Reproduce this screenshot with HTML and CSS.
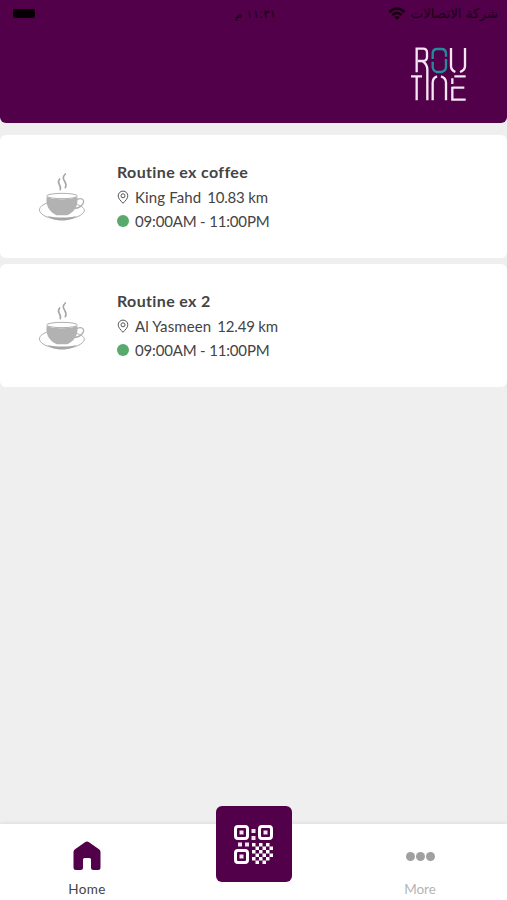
FILE: index.html
```html
<!DOCTYPE html>
<html lang="en">
<head>
    <meta charset="UTF-8">
    <meta name="viewport" content="width=device-width, initial-scale=1.0">
    <title>Routine</title>
    <link rel="stylesheet" href="styles.css">
</head>
<body>
    <svg class="sprites" aria-hidden="true">
        <symbol id="cup" viewBox="114 126 144 150">
            <g fill="none" stroke="#b0b0b0" stroke-width="3">
                <path d="M142 219C121 226 114 238 121 247C139 275 232 275 251 247C258 236 247 228 224 221"/>
                <ellipse cx="186" cy="198" rx="46" ry="8"/>
                <path d="M231 208C250 201 257 214 244 227C237 234 229 235 221 235" stroke-width="4"/>
            </g>
            <path d="M140 200C153 210 217 210 232 200C236 230 221 246 202 256H170C150 246 136 229 140 200Z" fill="#b2b2b2"/>
            <path d="M142 258C173 264 203 264 230 258C211 276 162 276 142 258Z" fill="#a6a6a6"/>
            <g fill="none" stroke="#a6a6a6" stroke-width="5" stroke-linecap="round">
                <path d="M179 147C167 159 185 163 181 179"/>
                <path d="M196 132C178 150 206 154 196 173"/>
            </g>
        </symbol>
        <symbol id="pin" viewBox="0 0 12 14">
            <path d="M6 13.300C3.500 10.600 1.200 8.500 1.200 5.800A4.800 4.700 0 0 1 10.800 5.800C10.800 8.500 8.500 10.600 6 13.300Z" fill="none" stroke="#555"/>
            <circle cx="6" cy="5.800" r="2" fill="none" stroke="#555"/>
        </symbol>
    </svg>

    <div class="app">
        <header class="header">
            <div class="status">
                <span class="battery"></span>
                <span class="time" dir="rtl">١١:٣١ م</span>
                <span class="carrier">
                    <svg class="wifi" viewBox="0 0 18 14">
                        <path d="M1.500 5Q9-2 16.500 5M4.300 8Q9 4 13.700 8" fill="none" stroke="#15000f" stroke-width="2.400"/>
                        <path d="M6.300 10Q9 7.800 11.700 10L9 13Z" fill="#15000f"/>
                    </svg>
                    <span class="network" dir="rtl">شركة الاتصالات</span>
                </span>
            </div>
            <svg class="logo" viewBox="45 36 171 165" role="img" aria-label="Routine">
                <g fill="none" stroke="#f5e6f3" stroke-width="7">
                    <path d="M65 112V41H84Q96 41 96 53V66Q96 78 84 78H69M83 79Q97 88 97 104V196"/>
                    <path d="M168 39V94Q169 106 181 111M210 39V94Q209 106 195 111"/>
                    <path d="M48 124H81M65 124V196"/>
                    <path d="M113 196V143Q113 129 126 124M138 124Q153 129 153 143V196"/>
                    <path d="M178 124H212M172 130V147M172 155V194H212M172 158H208"/>
                </g>
                <path d="M113 72V56Q113 42 127 42H139Q153 42 153 56V65M113 80V96Q114 108 126 111H139Q153 108 153 96V72" fill="none" stroke="#258b9c" stroke-width="7"/>
            </svg>
        </header>

        <main class="branches">
            <article class="card">
                <svg class="cup"><use href="#cup"/></svg>
                <div class="info">
                    <h2 class="name">Routine ex coffee</h2>
                    <p class="row"><svg class="pin"><use href="#pin"/></svg><span class="place">King Fahd</span><span class="distance">10.83 km</span></p>
                    <p class="row"><span class="dot"></span><span class="hours">09:00AM - 11:00PM</span></p>
                </div>
            </article>
            <article class="card">
                <svg class="cup"><use href="#cup"/></svg>
                <div class="info">
                    <h2 class="name">Routine ex 2</h2>
                    <p class="row"><svg class="pin"><use href="#pin"/></svg><span class="place">Al Yasmeen</span><span class="distance">12.49 km</span></p>
                    <p class="row"><span class="dot"></span><span class="hours">09:00AM - 11:00PM</span></p>
                </div>
            </article>
        </main>

        <nav class="tabs">
            <a class="tab">
                <svg class="home" viewBox="0 0 28 30">
                    <path d="M0.500 11Q0.500 9.500 2 8.300L12 1.200Q14 0 16 1.200L26 8.300Q27.500 9.500 27.500 11V26.500Q27.500 29 25 29H20.500Q18 29 18 26.500V18.500Q18 17 16.500 17H11.500Q10 17 10 18.500V26.500Q10 29 7.500 29H3Q0.500 29 0.500 26.500Z" fill="#510049"/>
                </svg>
                <span class="label">Home</span>
            </a>
            <a class="scan">
                <svg class="qr" viewBox="0 0 39 39">
                    <g fill="none" stroke="#fff" stroke-width="3">
                        <rect x="1.500" y="1.500" width="12" height="12" rx="2.500"/>
                        <rect x="25.500" y="1.500" width="12" height="12" rx="2.500"/>
                        <rect x="1.500" y="25.500" width="12" height="12" rx="2.500"/>
                    </g>
                    <path fill="#f3e3f1" d="M5.500 5.500h4v4h-4zM29.500 5.500h4v4h-4zM5.500 29.500h4v4h-4zM17.500 4h4v4h-4zM17.500 11h4v4h-4zM4 17.500h4v4h-4zM11 17.500h4v4h-4z"/>
                    <path fill="#fff" d="M18 18h3.500v3.500h-3.500zM25 18h3.500v3.500h-3.500zM32 18h3.500v3.500h-3.500zM21.500 21.500h3.500v3.500h-3.500zM28.500 21.500h3.500v3.500h-3.500zM35.500 21.500h3.500v3.500h-3.500zM18 25h3.500v3.500h-3.500zM25 25h3.500v3.500h-3.500zM32 25h3.500v3.500h-3.500zM21.500 28.500h3.500v3.500h-3.500zM28.500 28.500h3.500v3.500h-3.500zM35.500 28.500h3.500v3.500h-3.500zM18 32h3.500v3.500h-3.500zM25 32h3.500v3.500h-3.500zM32 32h3.500v3.500h-3.500zM21.500 35.500h3.500v3.500h-3.500zM28.500 35.500h3.500v3.500h-3.500z"/>
                </svg>
            </a>
            <a class="tab more">
                <span class="dots"><i></i><i></i><i></i></span>
                <span>More</span>
            </a>
        </nav>
    </div>
</body>
</html>
```

FILE: styles.css
```css
* {
    box-sizing: border-box;
}

body {
    margin: 0;
    background-color: #efefef;
    color: #444;
    font-family: Lato, 'Open Sans', sans-serif;
}

.sprites {
    display: none;
}

.app {
    display: flex;
    flex-direction: column;
    height: 900px;
    overflow: hidden;
}

/* Header */
.header {
    display: flex;
    flex-direction: column;
    height: 123px;
    background-color: #510049;
    border-radius: 0 0 6px 6px;
}

.status {
    display: grid;
    grid-template-columns: 1fr auto 1fr;
    align-items: center;
    height: 27px;
    padding: 0 9px 0 13px;
    color: #1c0018;
    font-family: 'DejaVu Sans', sans-serif;
    font-size: 12px;
}

.battery {
    width: 22px;
    height: 9px;
    background: #060005;
    border-radius: 2px;
}

.carrier {
    display: flex;
    align-items: center;
    justify-content: flex-end;
    gap: 5px;
    white-space: nowrap;
}

.network {
    font-size: 13.4px;
}

.wifi {
    width: 18px;
    height: 14px;
}

.logo {
    width: 57px;
    height: 55px;
    margin: 20px 40px 0 auto;
}

/* Branch cards */
.branches {
    flex: 1;
    display: flex;
    flex-direction: column;
    gap: 6.4px;
    padding-top: 12px;
}

.card {
    display: flex;
    height: 123px;
    padding: 25px 0 0 38px;
    background: white;
    border-radius: 6px;
}

.cup {
    width: 48px;
    height: 50px;
    margin-top: 12px;
}

.info {
    margin-left: 31px;
}

.name {
    height: 24.6px;
    margin: 0;
    font-size: 16px;
    font-weight: bold;
    letter-spacing: 0.36px;
    line-height: 24px;
}

.row {
    display: flex;
    align-items: center;
    height: 24px;
    margin: 0;
    font-size: 15px;
    white-space: nowrap;
}

.pin {
    width: 12px;
    height: 14px;
    margin-right: 6px;
}

.place {
    letter-spacing: 0.12px;
}

.distance {
    margin-left: 6px;
    letter-spacing: -0.2px;
}

.dot {
    width: 12px;
    height: 12px;
    margin-right: 6px;
    background: #58aa6c;
    border-radius: 50%;
}

.hours {
    letter-spacing: -0.17px;
}

/* Bottom tabs */
.tabs {
    display: grid;
    grid-template-columns: 174px 1fr 174px;
    height: 76px;
    background: white;
    box-shadow: 0 -1px 4px rgba(0, 0, 0, 0.08);
}

.tab {
    display: flex;
    flex-direction: column;
    align-items: center;
    padding-top: 17px;
    font-size: 13.5px;
    line-height: 18px;
}

.home {
    width: 28px;
    height: 30px;
    margin-bottom: 9px;
}

.label {
    letter-spacing: 0.4px;
}

.scan {
    display: flex;
    align-items: center;
    justify-content: center;
    justify-self: center;
    width: 76px;
    height: 76px;
    margin-top: -18px;
    background: #510049;
    border-radius: 6px;
}

.qr {
    width: 39px;
    height: 39px;
}

.more {
    color: #b5b5b5;
}

.dots {
    display: flex;
    align-items: center;
    gap: 1px;
    height: 30px;
    margin-bottom: 9px;
}

.dots i {
    width: 9px;
    height: 9px;
    background: #a0a0a0;
    border-radius: 50%;
}
```
